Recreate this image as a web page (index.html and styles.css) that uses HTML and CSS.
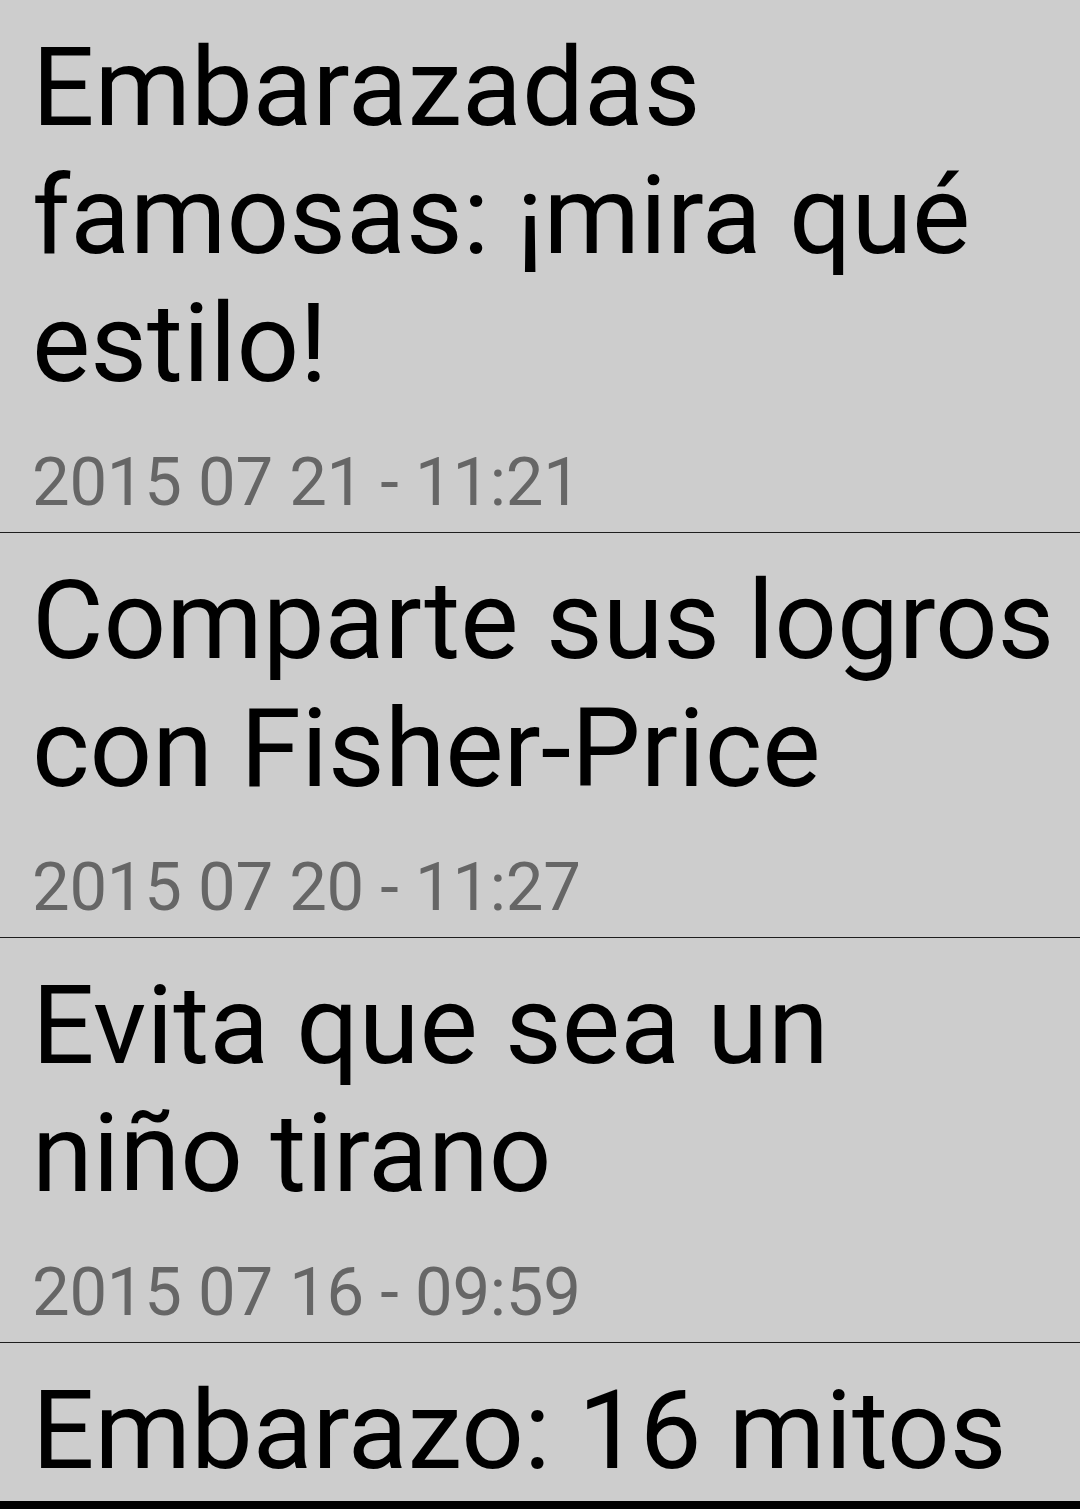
FILE: index.html
```html
<!DOCTYPE html>
<html lang="es">

<head>
    <meta charset="UTF-8">
    <meta name="viewport" content="width=device-width, initial-scale=1.0">
    <title>Noticias</title>
    <link rel="stylesheet" href="styles.css">
</head>

<body>
    <div class="news-list">
        <div class="news-item">
            <h2 class="news-title">Embarazadas famosas: ¡mira qué estilo!</h2>
            <p class="news-date">2015 07 21 - 11:21</p>
        </div>
        <div class="news-item">
            <h2 class="news-title">Comparte sus logros con Fisher-Price</h2>
            <p class="news-date">2015 07 20 - 11:27</p>
        </div>
        <div class="news-item">
            <h2 class="news-title">Evita que sea un niño tirano</h2>
            <p class="news-date">2015 07 16 - 09:59</p>
        </div>
        <div class="news-item">
            <h2 class="news-title">Embarazo: 16 mitos</h2>
        </div>
    </div>
    <div class="bottom-bar"></div>
</body>

</html>
```

FILE: styles.css
```css
html, body {
    margin: 0;
    padding: 0;
    height: 100%;
    overflow: hidden;
}

body {
    background-color: #cdcdcd;
    font-family: Roboto, "Noto Sans", sans-serif;
    display: flex;
    flex-direction: column;
}

.news-list {
    flex: 1;
    overflow: hidden;
}

.news-item {
    padding: 24px 20px 9px 32px;
    border-bottom: 1px solid #1e1e1e;
}

.news-title {
    margin: 0;
    font-size: 110px;
    font-weight: normal;
    line-height: 128px;
    color: #000;
}

.news-date {
    margin: 33px 0 0 0;
    font-size: 67px;
    letter-spacing: -0.25px;
    line-height: 82px;
    color: #666;
}

.bottom-bar {
    height: 8px;
    background-color: #000;
    flex-shrink: 0;
}
```
